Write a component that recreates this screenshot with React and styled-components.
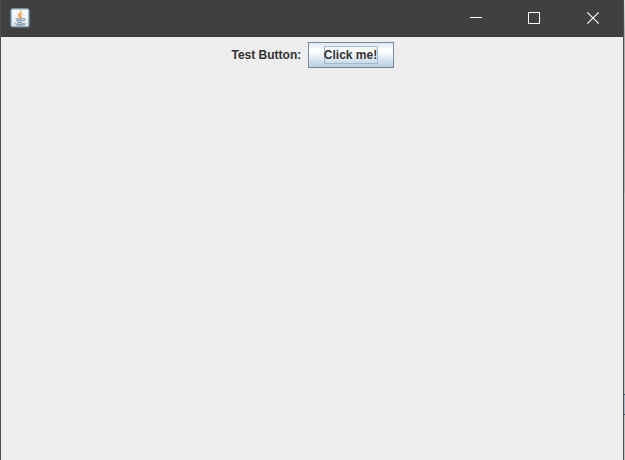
import React from "react";
import styled, { createGlobalStyle } from "styled-components";

const GlobalStyle = createGlobalStyle`
  * { box-sizing: border-box; }
  body { margin: 0; overflow: hidden; background: #b4b4b4; }
`;

const Desktop = styled.main`
  display: flex;
  width: 625px;
  height: 460px;
`;

const Frame = styled.section`
  display: flex;
  flex-direction: column;
  width: 624px;
  border: solid #4e4e4e;
  border-width: 0 1px;
  background: #eeeeee;
`;

const TitleBar = styled.header`
  display: flex;
  align-items: flex-start;
  justify-content: space-between;
  height: 37px;
  background: #404040;
  border-bottom: 1px solid #3b393b;
`;

const AppIcon = styled.svg`
  display: block;
  width: 20px;
  height: 20px;
  margin: 8px 0 0 9px;
`;

const Controls = styled.div`
  display: flex;
  width: 176px;
  margin-right: 0;
`;

const ControlButton = styled.button`
  display: block;
  width: ${({ $width }) => $width}px;
  height: 36px;
  padding: 0;
  border: 0;
  background: transparent;
  svg { display: block; }
`;

const Content = styled.div`
  display: flex;
  justify-content: center;
  align-items: center;
  gap: 7px;
  height: 26px;
  margin-top: 5px;
  font: bold 12px/16px "Liberation Sans", Arial, sans-serif;
  color: #333333;
`;

const Label = styled.span`
  width: 69px;
  margin-left: 1px;
  white-space: nowrap;
`;

const PushButton = styled.button`
  display: flex;
  align-items: center;
  justify-content: center;
  width: 86px;
  height: 26px;
  padding: 0;
  border: 1px solid #7a8a99;
  background: linear-gradient(#dde8f3 0%, #ffffff 30%, #ffffff 36%, #b8cfe5 100%);
  font: inherit;
  color: inherit;
`;

const FocusText = styled.span`
  display: flex;
  justify-content: center;
  width: 54px;
  height: 18px;
  border: 1px solid #a3b8cc;
  line-height: 17px;
  white-space: nowrap;
`;

const Backdrop = styled.aside`
  width: 1px;
  padding-top: 394px;
  background: linear-gradient(#dedede 0, #aaaaaa 35px, #b0b0b0 192px, #c2c2c2 193px);
`;

const BackdropControl = styled.div`
  height: 21px;
  border: solid #28597d;
  border-width: 1px 0;
  background: #a9b9c8;
`;

function JavaIcon() {
  return (
    <AppIcon viewBox="0 0 20 20" aria-label="Java">
      <defs>
        <linearGradient id="tile" x1="0" y1="0" x2="0" y2="1">
          <stop stopColor="#ffffff" />
          <stop offset="1" stopColor="#e1e6e9" />
        </linearGradient>
      </defs>
      <rect x="1" y="0.8" width="18" height="18" rx="1.6" fill="url(#tile)" stroke="#7899ae" strokeWidth="1.3" />
      <g fill="none" strokeLinecap="round">
        <path d="M11 3.2c.5 2-3 2.7-2.4 4.5.2.9 1.2 1.2 1 2.3M12.1 6c-2.2 1.1-2 1.7-1.3 2.5.5.6.2 1.1-.3 1.5" stroke="#ee963f" strokeWidth="1.3" />
        <path d="M6 10.7c1.5.7 5.3.6 7 0M6.8 12.5c1.7.6 4 .5 5.3 0M7.4 14.1c1.5.5 3.3.4 4.3 0M13.4 10.7c2.5-.4 2.1 1.7-.1 2.3M4.8 15.1c-1.8 1.1 7.6 1.7 9.4.2M7 17c3 .4 6.8.1 8.2-.9" stroke="#668ba5" strokeWidth="1" />
      </g>
    </AppIcon>
  );
}

export default function App() {
  return (
    <>
      <GlobalStyle />
      <Desktop>
        <Frame>
          <TitleBar>
            <JavaIcon />
            <Controls>
              <ControlButton $width={58} aria-label="Minimize">
                <svg width="58" height="36"><path d="M23 17.5h12" stroke="#fff" /></svg>
              </ControlButton>
              <ControlButton $width={58} aria-label="Maximize">
                <svg width="58" height="36"><rect x="23.5" y="12.5" width="11" height="11" fill="none" stroke="#fff" /></svg>
              </ControlButton>
              <ControlButton $width={60} aria-label="Close">
                <svg width="60" height="36"><path d="m24.3 12.3 11.4 11.4m0-11.4L24.3 23.7" stroke="#fff" strokeWidth="1.15" /></svg>
              </ControlButton>
            </Controls>
          </TitleBar>
          <Content>
            <Label>Test Button:</Label>
            <PushButton><FocusText>Click me!</FocusText></PushButton>
          </Content>
        </Frame>
        <Backdrop><BackdropControl /></Backdrop>
      </Desktop>
    </>
  );
}
